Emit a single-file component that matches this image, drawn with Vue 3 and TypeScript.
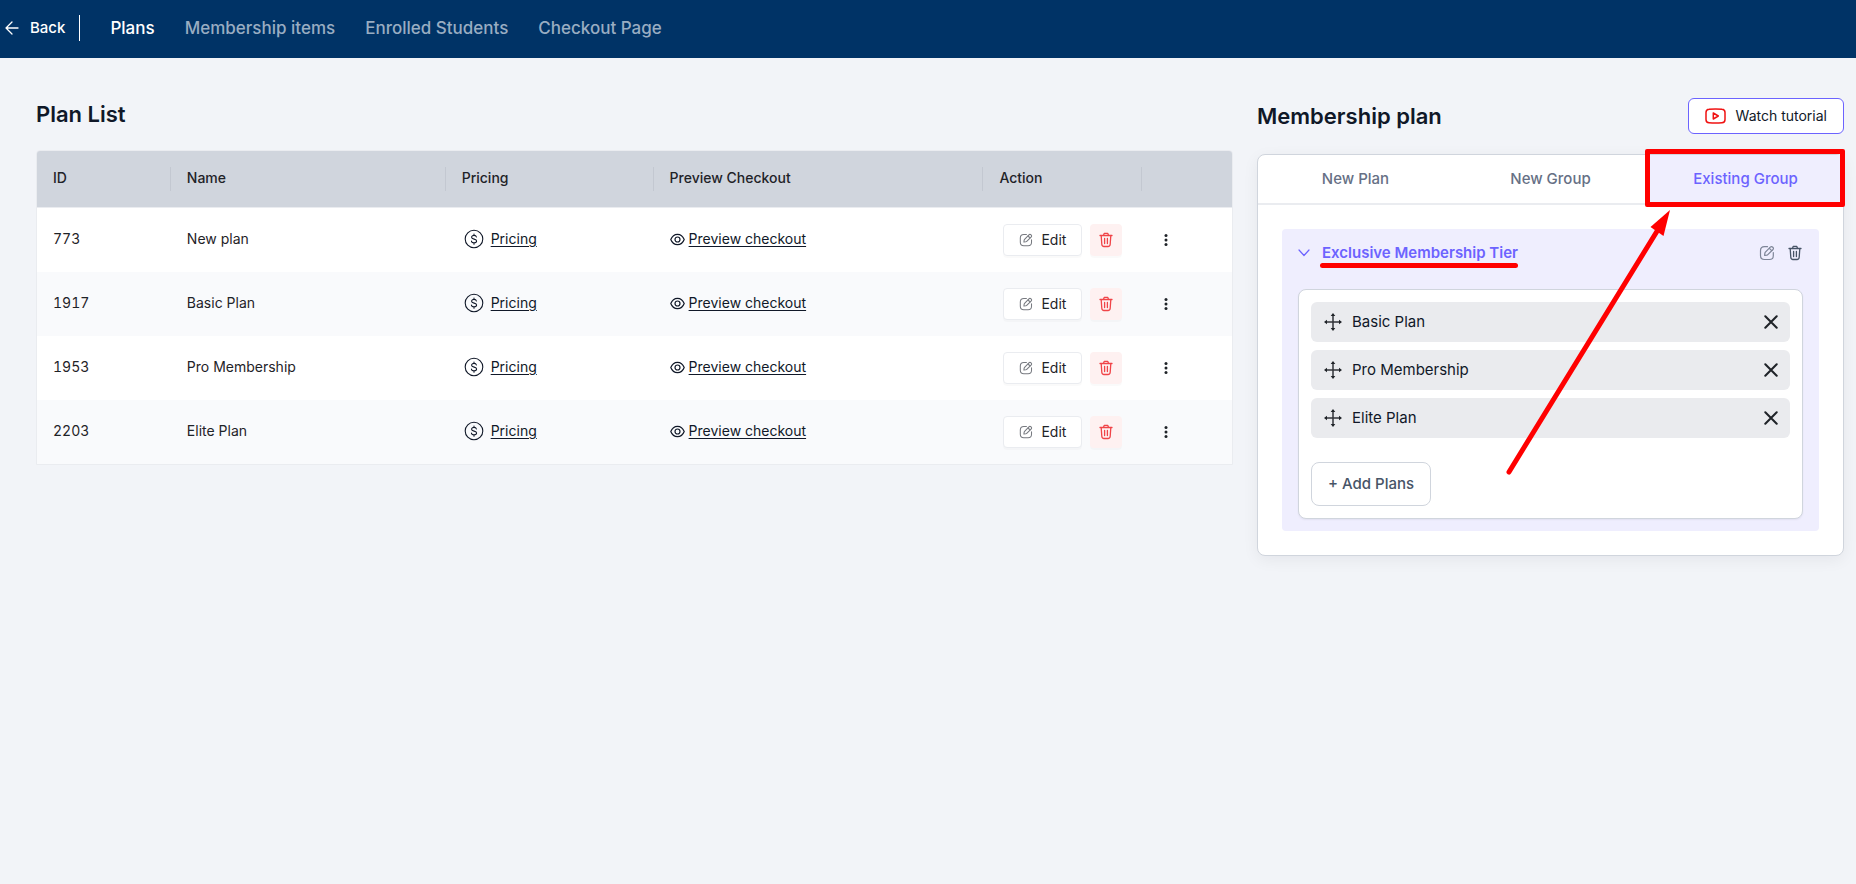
<script setup lang="ts">
import { ref } from 'vue'

interface Plan {
  id: number
  name: string
}

const navItems: string[] = ['Plans', 'Membership items', 'Enrolled Students', 'Checkout Page']
const tabs: string[] = ['New Plan', 'New Group', 'Existing Group']
const activeTab = ref('Existing Group')

const plans: Plan[] = [
  { id: 773, name: 'New plan' },
  { id: 1917, name: 'Basic Plan' },
  { id: 1953, name: 'Pro Membership' },
  { id: 2203, name: 'Elite Plan' },
]

const groupPlans = ref<string[]>(['Basic Plan', 'Pro Membership', 'Elite Plan'])

function removePlan(name: string): void {
  groupPlans.value = groupPlans.value.filter((p) => p !== name)
}
</script>

<template>
  <div class="page">
    <header class="topbar">
      <a class="back" href="#">
        <svg width="14" height="14" viewBox="0 0 14 14" fill="none" stroke="currentColor" stroke-width="1.3" stroke-linecap="round" stroke-linejoin="round" aria-hidden="true">
          <path d="M13 7H1M7 1L1 7l6 6" />
        </svg>
        <span>Back</span>
      </a>
      <nav class="nav">
        <a v-for="(item, i) in navItems" :key="item" href="#" class="nav-link" :class="{ active: i === 0 }">{{ item }}</a>
      </nav>
    </header>

    <main class="content">
      <section class="list">
        <h1 class="heading">Plan List</h1>
        <table class="plans">
          <colgroup>
            <col class="c-id" />
            <col class="c-name" />
            <col class="c-price" />
            <col class="c-preview" />
            <col class="c-action" />
            <col class="c-more" />
          </colgroup>
          <thead>
            <tr>
              <th>ID</th>
              <th>Name</th>
              <th>Pricing</th>
              <th>Preview Checkout</th>
              <th>Action</th>
              <th></th>
            </tr>
          </thead>
          <tbody>
            <tr v-for="plan in plans" :key="plan.id">
              <td class="text id">{{ plan.id }}</td>
              <td class="text">{{ plan.name }}</td>
              <td class="text">
                <a href="#" class="cell-link pricing">
                  <svg width="20" height="20" viewBox="0 0 20 20" fill="none" stroke="currentColor" stroke-width="1.1" stroke-linecap="round" aria-hidden="true">
                    <circle cx="10" cy="10" r="8.8" />
                    <path d="M12.400 8c-.2-1-1.100-1.600-2.400-1.600s-2.400.6-2.400 1.800c0 2.600 5 1.200 5 3.700 0 1.200-1.100 1.900-2.600 1.900s-2.500-.7-2.600-1.800M10 5v1.400M10 13.800v1.400" />
                  </svg>
                  <span>Pricing</span>
                </a>
              </td>
              <td class="text">
                <a href="#" class="cell-link preview">
                  <svg width="15" height="13" viewBox="0 0 15 13" fill="none" stroke="currentColor" stroke-width="1.2" aria-hidden="true">
                    <path d="M.8 6.5C2 3.400 4.500 1.300 7.500 1.300S13 3.400 14.200 6.500C13 9.600 10.500 11.700 7.500 11.700S2 9.600 .8 6.500z" />
                    <circle cx="7.500" cy="6.500" r="2.500" />
                  </svg>
                  <span>Preview checkout</span>
                </a>
              </td>
              <td>
                <div class="actions">
                  <button type="button" class="edit">
                    <svg width="14" height="14" viewBox="0 0 16 16" fill="none" stroke="#777a80" stroke-width="1.200" stroke-linecap="round" stroke-linejoin="round" aria-hidden="true">
                      <path d="M8.500 1.700H5.500C2.600 1.700 1.500 2.800 1.500 5.700v4.800c0 2.900 1.100 4 4 4h4.800c2.900 0 4-1.100 4-4V7.600" />
                      <path d="M11.300 2.200 6.400 7.200c-.3.300-.4.600-.5 1L5.600 10.400l2.200-.3c.4-.1.700-.2 1-.5l5-4.900c.8-.8.900-1.700 0-2.500s-1.700-.8-2.500 0z" />
                      <path d="M10.500 3.100c.4 1.200 1.200 2 2.400 2.400" />
                    </svg>
                    <span>Edit</span>
                  </button>
                  <button type="button" class="delete" aria-label="Delete">
                    <svg width="14" height="16" viewBox="0 0 14 16" fill="none" stroke="currentColor" stroke-width="1.300" stroke-linecap="round" stroke-linejoin="round" aria-hidden="true">
                      <path d="M1 3.500h12M4.500 3.300 5.200 1.400h3.600l.7 1.900M2.200 3.700l.6 8.600c.1 1.500.7 2.200 2.200 2.200h4c1.500 0 2.100-.7 2.200-2.200l.6-8.600M5.600 6.500v5M8.400 6.500v5" />
                    </svg>
                  </button>
                </div>
              </td>
              <td>
                <button type="button" class="more" aria-label="More options">
                  <svg width="4" height="12" viewBox="0 0 4 12" fill="currentColor" aria-hidden="true">
                    <circle cx="2" cy="1.600" r="1.500" />
                    <circle cx="2" cy="6" r="1.500" />
                    <circle cx="2" cy="10.400" r="1.500" />
                  </svg>
                </button>
              </td>
            </tr>
          </tbody>
        </table>
      </section>

      <aside class="side">
        <div class="side-head">
          <h2 class="heading">Membership plan</h2>
          <button type="button" class="watch">
            <svg width="21" height="16" viewBox="0 0 21 16" fill="none" stroke="#f01212" stroke-width="1.500" stroke-linejoin="round" aria-hidden="true">
              <path d="M4 1.200Q10.500.6 17 1.200q3 .2 3 3.300v7q0 3.100-3 3.300-6.500.6-13 0-3-.2-3-3.300v-7Q1 1.400 4 1.200z" />
              <path d="M8.300 5v6l5-3z" />
            </svg>
            <span>Watch tutorial</span>
          </button>
        </div>

        <div class="card">
          <div class="tabs" role="tablist">
            <button
              v-for="tab in tabs"
              :key="tab"
              type="button"
              role="tab"
              class="tab"
              :class="{ active: activeTab === tab }"
              :aria-selected="activeTab === tab"
              @click="activeTab = tab"
            >{{ tab }}</button>
          </div>

          <div class="group">
            <div class="group-head">
              <svg class="chev" width="12" height="8" viewBox="0 0 12 8" fill="none" stroke="currentColor" stroke-width="1.200" stroke-linecap="round" stroke-linejoin="round" aria-hidden="true">
                <path d="M1 1l5 5.500L11 1" />
              </svg>
              <h3 class="group-name">Exclusive Membership Tier</h3>
              <button type="button" class="icon-btn light" aria-label="Edit group">
                <svg width="16" height="16" viewBox="0 0 16 16" fill="none" stroke="currentColor" stroke-width="1.200" stroke-linecap="round" stroke-linejoin="round" aria-hidden="true">
                  <path d="M8.500 1.700H5.500C2.600 1.700 1.500 2.800 1.500 5.700v4.800c0 2.900 1.100 4 4 4h4.800c2.900 0 4-1.100 4-4V7.600" />
                  <path d="M11.300 2.200 6.400 7.200c-.3.300-.4.600-.5 1L5.600 10.400l2.200-.3c.4-.1.700-.2 1-.5l5-4.900c.8-.8.900-1.700 0-2.500s-1.700-.8-2.500 0z" />
                  <path d="M10.500 3.100c.4 1.200 1.200 2 2.400 2.400" />
                </svg>
              </button>
              <button type="button" class="icon-btn" aria-label="Delete group">
                <svg width="14" height="16" viewBox="0 0 14 16" fill="none" stroke="currentColor" stroke-width="1.300" stroke-linecap="round" stroke-linejoin="round" aria-hidden="true">
                  <path d="M1 3.500h12M4.500 3.300 5.200 1.400h3.600l.7 1.900M2.200 3.700l.6 8.600c.1 1.500.7 2.200 2.200 2.200h4c1.500 0 2.100-.7 2.200-2.200l.6-8.600M5.600 6.500v5M8.400 6.500v5" />
                </svg>
              </button>
            </div>

            <div class="group-body">
              <ul class="items">
                <li v-for="name in groupPlans" :key="name" class="item">
                  <svg width="18" height="18" viewBox="0 0 18 18" aria-hidden="true">
                    <path d="M9 2v14M2 9h14" stroke="#33363b" stroke-width="1.500" />
                    <path d="M9 0l2.300 3H6.700zM9 18l2.300-3H6.700zM0 9l3-2.300v4.600zM18 9l-3-2.300v4.600z" fill="#1f2328" />
                  </svg>
                  <span class="item-name">{{ name }}</span>
                  <button type="button" class="remove" :aria-label="'Remove ' + name" @click="removePlan(name)">
                    <svg width="14" height="14" viewBox="0 0 13 13" fill="none" stroke="#1f2328" stroke-width="1.900" stroke-linecap="round" aria-hidden="true">
                      <path d="M1.200 1.200l10.600 10.600M11.800 1.200 1.200 11.800" />
                    </svg>
                  </button>
                </li>
              </ul>
              <button type="button" class="add">+ Add Plans</button>
            </div>
          </div>

          <div class="mark-box"></div>
          <div class="mark-line"></div>
          <svg class="mark-arrow" width="167" height="268" viewBox="0 0 167 268" aria-hidden="true">
            <path d="M3 265 153 21" stroke="#f00" stroke-width="5" stroke-linecap="round" />
            <path d="M164 3 144.500 20l13 9z" fill="#f00" />
          </svg>
        </div>
      </aside>
    </main>
  </div>
</template>

<style>
body {
  background: #f2f4f8;
}
</style>

<style scoped>
.page {
  font-family: Inter, "Liberation Sans", sans-serif;
  font-size: 14px;
  line-height: 20px;
  color: #1f2328;
}

button {
  font: inherit;
  color: inherit;
  margin: 0;
  cursor: pointer;
}

svg {
  display: block;
  flex: none;
}

.topbar {
  display: flex;
  align-items: center;
  gap: 30px;
  height: 58px;
  padding: 0 5px 2px;
  box-sizing: border-box;
  background: #003366;
}

.back {
  display: flex;
  align-items: center;
  gap: 11px;
  height: 26px;
  padding-right: 14px;
  border-right: 1px solid #fff;
  color: #fff;
  font-size: 15px;
  font-weight: 500;
  text-decoration: none;
}

.nav {
  display: flex;
  gap: 30px;
}

.nav-link {
  font-size: 17px;
  font-weight: 500;
  color: #99adc2;
  text-decoration: none;
}

.nav-link.active {
  color: #fff;
}

.content {
  display: grid;
  grid-template-columns: minmax(0, 1197fr) minmax(0, 587fr);
  gap: 24px;
  align-items: start;
  padding: 40px 12px 40px 36px;
}

.heading {
  margin: 0;
  font-size: 22px;
  line-height: 32px;
  font-weight: 600;
  color: #101828;
}

.list .heading {
  margin-bottom: 20px;
}

.plans {
  width: 100%;
  table-layout: fixed;
  border-collapse: separate;
  border-spacing: 0;
  border: 1px solid #eaecf0;
  border-radius: 4px 4px 0 0;
  overflow: hidden;
}

.c-id { width: 11.2%; }
.c-name { width: 23%; }
.c-price { width: 17.4%; }
.c-preview { width: 27.6%; }
.c-action { width: 13.3%; }
.c-more { width: 7.5%; }

th {
  height: 54px;
  padding: 0 16px 2px;
  text-align: left;
  font-weight: 500;
  background: linear-gradient(#c3c8d1, #c3c8d1) right center / 1px 24px no-repeat #d0d5dd;
  border-bottom: 1px solid #eaecf0;
}

th:last-child {
  background: #d0d5dd;
}

td {
  height: 64px;
  box-sizing: border-box;
  padding: 0 16px;
  background: #fff;
}

.text {
  padding-bottom: 2px;
}

tbody tr:nth-child(even) td {
  background: #f9fafc;
}

.id {
  font-size: 14px;
  font-variant-numeric: tabular-nums;
}

.cell-link {
  display: flex;
  align-items: center;
  color: #101828;
  text-underline-offset: 2px;
}

.pricing {
  gap: 7px;
  padding-left: 2px;
}

.preview {
  gap: 4px;
}

.actions {
  display: flex;
  gap: 8px;
  padding-left: 4px;
}

.edit {
  display: flex;
  align-items: center;
  gap: 8px;
  height: 32px;
  padding: 0 15px;
  background: #fff;
  border: 1px solid #eaecf0;
  border-radius: 4px;
  box-shadow: 0 2px 0 rgba(0, 0, 0, 0.02);
}

.delete {
  display: grid;
  place-items: center;
  width: 32px;
  height: 32px;
  padding: 0;
  color: #f04448;
  background: #fef1f1;
  border: 0;
  border-radius: 4px;
  box-shadow: 0 2px 0 rgba(0, 0, 0, 0.02);
}

.more {
  display: grid;
  place-items: center;
  width: 16px;
  height: 24px;
  padding: 0;
  border: 0;
  background: none;
}

.side-head {
  display: flex;
  justify-content: space-between;
  align-items: center;
  margin-bottom: 20px;
}

.watch {
  display: flex;
  align-items: center;
  gap: 10px;
  height: 36px;
  padding: 0 16px;
  background: #fff;
  border: 1px solid #6c63ff;
  border-radius: 6px;
  color: #101828;
}

.card {
  position: relative;
  background: #fff;
  border: 1px solid #d0d5dd;
  border-radius: 8px;
  box-shadow: 0 4px 16px rgba(16, 24, 40, 0.06);
}

.tabs {
  display: grid;
  grid-template-columns: repeat(3, 1fr);
  border-bottom: 2px solid #eaecf0;
}

.tab {
  height: 48px;
  padding: 0;
  border: 0;
  background: none;
  color: #667085;
  font-size: 15px;
  font-weight: 500;
}

.tab.active {
  color: #6c63ff;
  background: #efeefe;
}

.group {
  margin: 24px;
  padding: 16px 16px 12px;
  background: #efeefe;
  border-radius: 4px;
}

.group-head {
  display: flex;
  align-items: center;
  height: 16px;
  margin-bottom: 28px;
  color: #475467;
}

.chev {
  color: #6c63ff;
}

.group-name {
  flex: 1;
  margin: 0 0 0 12px;
  color: #6c63ff;
  font-size: 15px;
  font-weight: 600;
}

.icon-btn {
  display: grid;
  place-items: center;
  width: 16px;
  height: 16px;
  margin-left: 12px;
  padding: 0;
  border: 0;
  background: none;
}

.icon-btn.light {
  color: #7d8597;
}

.group-body {
  padding: 12px;
  background: #fff;
  border: 1px solid #d0d5dd;
  border-radius: 8px;
  box-shadow: 0 1px 2px rgba(16, 24, 40, 0.06);
}

.items {
  display: grid;
  gap: 8px;
  margin: 0 0 24px;
  padding: 0;
  list-style: none;
}

.item {
  display: flex;
  align-items: center;
  gap: 10px;
  height: 40px;
  padding: 0 12px 0 13px;
  box-sizing: border-box;
  background: #eaebee;
  border-radius: 6px;
  color: #101828;
  font-size: 15px;
}

.item-name {
  flex: 1;
}

.remove {
  padding: 0;
  border: 0;
  background: none;
}

.add {
  height: 44px;
  padding: 0 16px;
  background: #fff;
  border: 1px solid #d0d5dd;
  border-radius: 8px;
  color: #475467;
  font-size: 15px;
  font-weight: 500;
}

.mark-box {
  position: absolute;
  top: -6px;
  right: -2px;
  width: 200px;
  height: 58px;
  box-sizing: border-box;
  border: 5px solid #f00;
  border-radius: 2px;
  pointer-events: none;
}

.mark-line {
  position: absolute;
  top: 108px;
  left: 62px;
  width: 198px;
  height: 5px;
  border-radius: 3px;
  background: #f00;
}

.mark-arrow {
  position: absolute;
  top: 52px;
  right: 170px;
  pointer-events: none;
}
</style>
